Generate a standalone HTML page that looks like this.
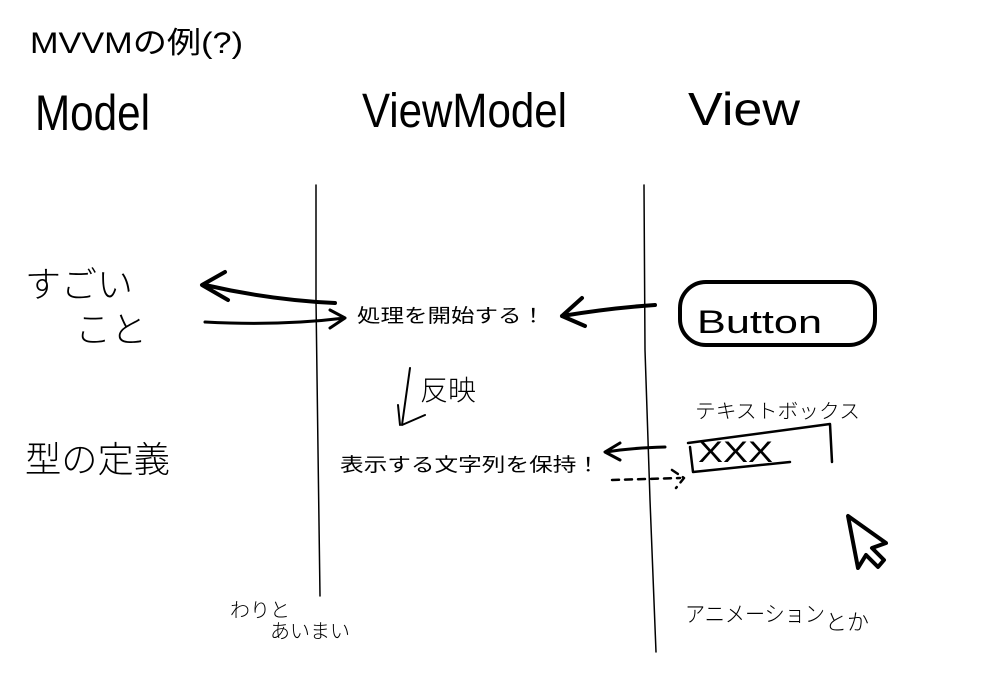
<!DOCTYPE html>
<html><head><meta charset="utf-8"><style>
html,body{margin:0;padding:0;background:#fff;width:1000px;height:700px;overflow:hidden}
svg{display:block}
.t{font-family:"Liberation Sans","Noto Sans CJK JP",sans-serif;fill:#000}
.h{font-family:"Liberation Sans","Noto Sans CJK JP",sans-serif;fill:#000;font-weight:300}
</style></head><body>
<svg width="1000" height="700" viewBox="0 0 1000 700" xmlns="http://www.w3.org/2000/svg">
<text class="t" x="30" y="53" font-size="30" textLength="213" lengthAdjust="spacingAndGlyphs">MVVMの例(?)</text>
<text class="h" x="35" y="130" font-size="50" textLength="115" lengthAdjust="spacingAndGlyphs">Model</text>
<text class="h" x="362" y="127" font-size="48" textLength="205" lengthAdjust="spacingAndGlyphs">ViewModel</text>
<text class="h" x="688" y="125" font-size="46" textLength="112" lengthAdjust="spacingAndGlyphs">View</text>
<g fill="none" stroke="#000" stroke-linecap="round" stroke-linejoin="round">
<path d="M316 185 L316 300 L318 450 L320 596" stroke-width="1.5"/>
<path d="M644 185 L645 350 L650 500 L656 652" stroke-width="1.5"/>
<path d="M335 303 Q270 300 205 285 M225 272 L202 285 L228 300" stroke-width="4"/>
<path d="M205 322 Q280 326 345 318 M330 310 L345 318 L330 328" stroke-width="3"/>
<path d="M655 305 Q610 308 562 316 M582 298 L562 316 L585 326" stroke-width="4"/>
<rect x="680" y="282" width="195" height="63" rx="26" stroke-width="4"/>
<path d="M410 368 L402 425 L425 415 M400 425 L398 405" stroke-width="2"/>
<path d="M665 447 Q630 448 606 452 M620 443 L605 452 L620 460" stroke-width="3"/>
<path d="M612 480 L680 478 M672 470 L684 478 L676 488" stroke-width="2.5" stroke-dasharray="7 6"/>
<path d="M688 443 L830 424 L832 462 M690 447 L693 472 L790 462" stroke-width="2.5"/>
<path d="M848 516 L858 568 L866 555 L878 567 L884 560 L872 548 L886 543 Z" stroke-width="4"/>
</g>
<text class="h" x="697" y="333" font-size="32" textLength="125" lengthAdjust="spacingAndGlyphs">Button</text>
<text class="t" x="357" y="322" font-size="19" textLength="188" lengthAdjust="spacingAndGlyphs">処理を開始する！</text>
<text class="t" x="340" y="471" font-size="19" textLength="260" lengthAdjust="spacingAndGlyphs">表示する文字列を保持！</text>
<text class="h" x="420" y="400" font-size="28">反映</text>
<text class="h" x="25" y="297" font-size="36">すごい</text>
<text class="h" x="75" y="342" font-size="36">こと</text>
<text class="h" x="25" y="472" font-size="36" textLength="145" lengthAdjust="spacingAndGlyphs">型の定義</text>
<text class="h" x="695" y="418" font-size="20" textLength="165" lengthAdjust="spacingAndGlyphs">テキストボックス</text>
<text class="h" x="698" y="462" font-size="30" textLength="75" lengthAdjust="spacingAndGlyphs">XXX</text>
<text class="h" x="230" y="617" font-size="20">わりと</text>
<text class="h" x="270" y="638" font-size="20">あいまい</text>
<text class="h" x="685" y="622" font-size="22" textLength="140" lengthAdjust="spacingAndGlyphs">アニメーション</text>
<text class="h" x="825" y="630" font-size="22">とか</text>
</svg>
</body></html>
